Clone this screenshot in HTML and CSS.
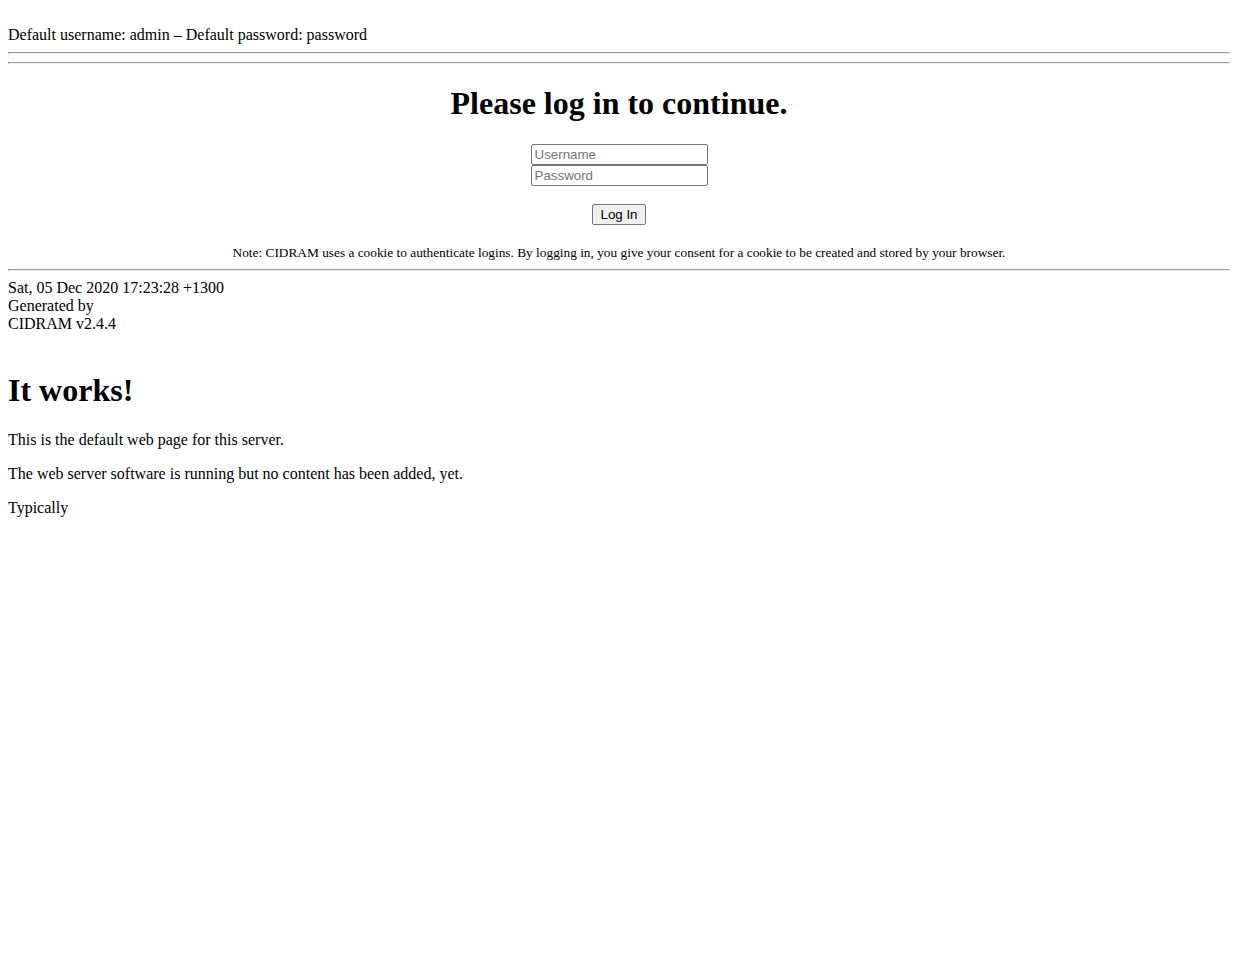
FILE: index.html
```html
<!DOCTYPE html>
<html>
<head>
<meta charset="utf-8">
<title>CIDRAM</title>
<link rel="stylesheet" href="styles.css">
</head>
<body>
<div class="hint">Default username: admin – Default password: password</div>
<hr>
<hr>
<h1 class="title">Please log in to continue.</h1>
<form class="login">
  <input class="field" type="text" placeholder="Username">
  <input class="field" type="password" placeholder="Password">
  <div class="actions"><button type="button" class="btn">Log In</button></div>
  <div class="note">Note: CIDRAM uses a cookie to authenticate logins. By logging in, you give your consent for a cookie to be created and stored by your browser.</div>
</form>
<hr>
<div class="footer">Sat, 05 Dec 2020 17:23:28 +1300<br>Generated by<br>CIDRAM v2.4.4</div>
<h1 class="works">It works!</h1>
<p>This is the default web page for this server.</p>
<p>The web server software is running but no content has been added, yet.</p>
<p>Typically</p>
</body>
</html>
```
FILE: styles.css
```css
body {
  margin: 8px;
  font-family: "Liberation Serif", "Times New Roman", serif;
  font-size: 16px;
  color: #000;
  background: #fff;
}
.hint {
  margin-top: 18px;
  line-height: 18px;
}
hr {
  margin: 8px 0;
  height: 0;
  border-style: solid;
  border-width: 1px;
  border-top-color: #9a9a9a;
  border-left-color: #9a9a9a;
  border-bottom-color: #eeeeee;
  border-right-color: #eeeeee;
}
.title {
  text-align: center;
  font-size: 32px;
  margin: 21.44px 0;
}
.login {
  margin: 0;
}
.field {
  display: block;
  margin: 0 auto;
  width: 177px;
  height: 21px;
  box-sizing: border-box;
  padding: 1px 3px;
  border: 1px solid #767676;
  border-radius: 2px;
  font-family: "Liberation Sans", Arial, sans-serif;
  font-size: 13.333px;
}
.field::placeholder {
  color: #757575;
}
.actions {
  margin-top: 18px;
  text-align: center;
  line-height: 0;
}
.btn {
  font-family: "Liberation Sans", Arial, sans-serif;
  font-size: 13.333px;
  height: 21px;
  padding: 1px 7px;
  border: 1px solid #767676;
  border-radius: 2px;
  background: #efefef;
  color: #000;
  line-height: normal;
}
.note {
  margin-top: 20px;
  text-align: center;
  font-size: 13.333px;
  line-height: 16px;
}
.footer {
  line-height: 18px;
}
.works {
  font-size: 32px;
  margin: 39.44px 0 21.44px;
}
p {
  margin: 16px 0;
  line-height: 18px;
}
```
